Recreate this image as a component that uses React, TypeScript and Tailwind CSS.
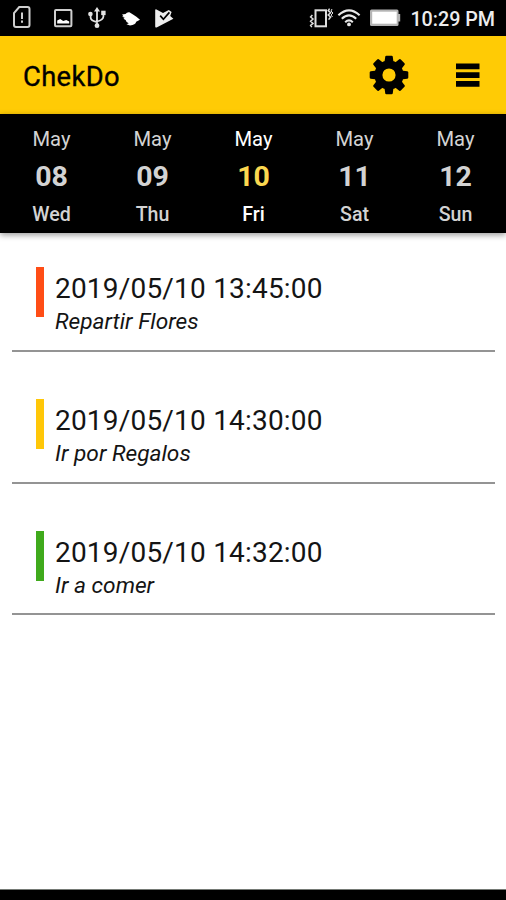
const days = [
  { month: 'May', day: '08', weekday: 'Wed' },
  { month: 'May', day: '09', weekday: 'Thu' },
  { month: 'May', day: '10', weekday: 'Fri', active: true },
  { month: 'May', day: '11', weekday: 'Sat' },
  { month: 'May', day: '12', weekday: 'Sun' },
]

const tasks = [
  { date: '2019/05/10 13:45:00', title: 'Repartir Flores', color: 'bg-[#ff4d16]' },
  { date: '2019/05/10 14:30:00', title: 'Ir por Regalos', color: 'bg-[#ffc708]' },
  { date: '2019/05/10 14:32:00', title: 'Ir a comer', color: 'bg-[#3faa1c]' },
]

const teeth = [0, 45, 90, 135, 180, 225, 270, 315]

function StatusBar() {
  return (
    <div className="flex h-9 shrink-0 items-start bg-black pl-[12px] text-white">
      {/* SIM alert */}
      <svg className="mt-[5px] h-6 w-5" viewBox="0 0 20 24" fill="none" stroke="#cfcfcf" strokeWidth="2">
        <path d="M7.2 2H15.5Q17.5 2 17.5 4V20Q17.5 22 15.5 22H4Q2 22 2 20V8Z" />
        <path d="M10 7.5v6.5M10 15.5v2.3" />
      </svg>
      {/* Image */}
      <svg className="ml-[21px] mt-[8px] h-5 w-5" viewBox="0 0 20 20">
        <rect x="2" y="2" width="16.4" height="16.2" rx="1" fill="none" stroke="#cfcfcf" strokeWidth="2" />
        <path d="M4.2 15.5V12.6l3-1.6 3 2 3-1 3 1.5v2Z" fill="#fff" />
      </svg>
      {/* USB */}
      <svg className="ml-[14px] mt-[6px] h-[23px] w-5" viewBox="0 0 20 23" fill="none" stroke="#e2e2e2" strokeWidth="1.8">
        <path d="M10 4v16M3.6 8v3.5Q3.8 15 10 16M16.4 7v3.5Q16.2 14 10 15.5" />
        <path d="M7 5.5 10 1l3 4.5Z" fill="#e2e2e2" stroke="none" />
        <circle cx="3.4" cy="8" r="2.3" fill="#e2e2e2" stroke="none" />
        <path d="M14.2 4.7h4.4v4.4h-4.4Z" fill="#e2e2e2" stroke="none" />
        <circle cx="10" cy="19.7" r="2.4" fill="#e2e2e2" stroke="none" />
      </svg>
      {/* Bird */}
      <svg className="ml-[14px] mt-[11px] h-[15px] w-5" viewBox="0 0 20 15">
        <path d="M1 3.5 4.5 3Q6 .8 8.4 1.2L12 3.4l3.4 2.3 3.6 3-3.8 2Q14.5 14 9 14.4L5.5 13.3l2.3-1Q5 11.2 4.6 9L2.5 7.8l1.2-1L1 5.8l1.5-.6Z" fill="#fff" />
      </svg>
      {/* Play store check */}
      <svg className="ml-[13px] mt-[8px] h-[21px] w-[21px]" viewBox="0 0 21 21">
        <path d="M2 1.2Q1.2 1.2 1.2 2v16.5Q1.2 20 2.6 19.4L19.4 10.8 16.2 8 17.6 4 14.8 2 9 5Z" fill="#eee" />
        <path d="m6.2 7.6 3.2 3.6L15.4 4.4" fill="none" stroke="#000" strokeWidth="1.7" />
      </svg>
      <div className="grow" />
      {/* Vibrate */}
      <svg className="mt-[8px] h-5 w-[25px]" viewBox="0 0 25 20" fill="none" stroke="#dedede">
        <rect x="6.5" y="2.3" width="10.5" height="16" strokeWidth="2" />
        <path d="m3.4 7-1.8 2 2.4 2-2.4 2.2 2.4 2.2-2.4 2 1.2 1.8M20.6.6l-1.4 2 2.4 2.2-2.4 2.2 2.4 2-2 2.6" strokeWidth="1.5" />
        <path d="m23 1-1 2 2 2-2 2 1.5 2" strokeWidth="1" />
      </svg>
      {/* Wifi */}
      <svg className="ml-[3px] mt-[8px] h-[19px] w-6" viewBox="0 0 24 19" fill="none" stroke="#e8e8e8" strokeWidth="2.1">
        <path d="M1.4 7.2Q12-2.6 22.6 7.2M4.8 10.8q7.2-6.8 14.4 0M8.2 14.2q3.8-3.6 7.6 0" />
        <circle cx="12" cy="16.4" r="1.9" fill="#e8e8e8" stroke="none" />
      </svg>
      {/* Battery */}
      <svg className="ml-[9px] mt-[9px] h-[18px] w-8" viewBox="0 0 32 18">
        <rect x="0" y=".5" width="28.5" height="16.5" rx="1.5" fill="#b5b5b5" />
        <rect x="2.2" y="2.7" width="24.5" height="12" fill="#fff" />
        <path d="M28 5h2.2v7.5H28Z" fill="#b5b5b5" />
      </svg>
      <span className="ml-[8px] mr-[11px] mt-[6px] text-[19.7px] leading-7 font-medium whitespace-nowrap text-[#ededed]">10:29 PM</span>
    </div>
  )
}

function AppBar() {
  return (
    <header className="flex h-[78px] shrink-0 items-center bg-[#ffcb05] pl-[23px] pr-[26px] text-black">
      <h1 className="grow pt-[3px] text-[27.3px] leading-8 font-normal tracking-[0.4px] [-webkit-text-stroke:0.35px_black]">ChekDo</h1>
      <svg className="h-10 w-10" viewBox="-20 -20 40 40">
        {teeth.map((angle) => (
          <path key={angle} d="M-4.6-12 -3.8-18.3Q-3.6-19.3-2.6-19.3H2.6Q3.6-19.3 3.8-18.3L4.6-12Z" transform={`rotate(${angle})`} />
        ))}
        <circle r="10.6" fill="none" stroke="#000" strokeWidth="8" />
      </svg>
      <svg className="ml-[47px] h-6 w-6" viewBox="0 0 24 24">
        <path d="M0 .5h23.5v5.7H0ZM0 9.2h23.5v5.7H0ZM0 18h23.5v5.7H0Z" />
      </svg>
    </header>
  )
}

function DayStrip() {
  return (
    <div className="z-10 grid h-[119px] shrink-0 grid-cols-5 bg-black pl-px text-center shadow-[0_2px_6px_rgba(0,0,0,0.4)]">
      {days.map((d) => (
        <div key={d.day} className={`flex flex-col pt-[11px] ${d.active ? 'text-white' : 'text-[#d3d3d3]'}`}>
          <span className="text-[20.2px] leading-7">{d.month}</span>
          <span className={`mt-[8px] text-[28.5px] leading-8 font-bold ${d.active ? 'text-[#fbd850]' : ''}`}>{d.day}</span>
          <span className="mt-[10px] text-[19.6px] leading-6 font-medium">{d.weekday}</span>
        </div>
      ))}
    </div>
  )
}

export default function App() {
  return (
    <div className="flex h-[900px] w-[506px] flex-col overflow-hidden bg-white font-[Roboto,sans-serif]">
      <StatusBar />
      <AppBar />
      <DayStrip />

      {/* Task list */}
      <main className="grow px-3 pr-[11px]">
        {tasks.map((task) => (
          <div key={task.title} className="flex h-[131.7px] border-b-2 border-[#949494] pl-[24px] pt-[47px] first:h-[119px] first:pt-[34px]">
            <div className={`h-[50px] w-[8px] shrink-0 ${task.color}`} />
            <div className="pl-[11px] pt-[6px] text-[#141414]">
              <p className="text-[28px] leading-8 tracking-[0.2px]">{task.date}</p>
              <p className="mt-[3px] text-[22.7px] leading-7 italic">{task.title}</p>
            </div>
          </div>
        ))}
      </main>

      <div className="h-[11px] shrink-0 border-t border-[#757a75] bg-black" />
    </div>
  )
}
